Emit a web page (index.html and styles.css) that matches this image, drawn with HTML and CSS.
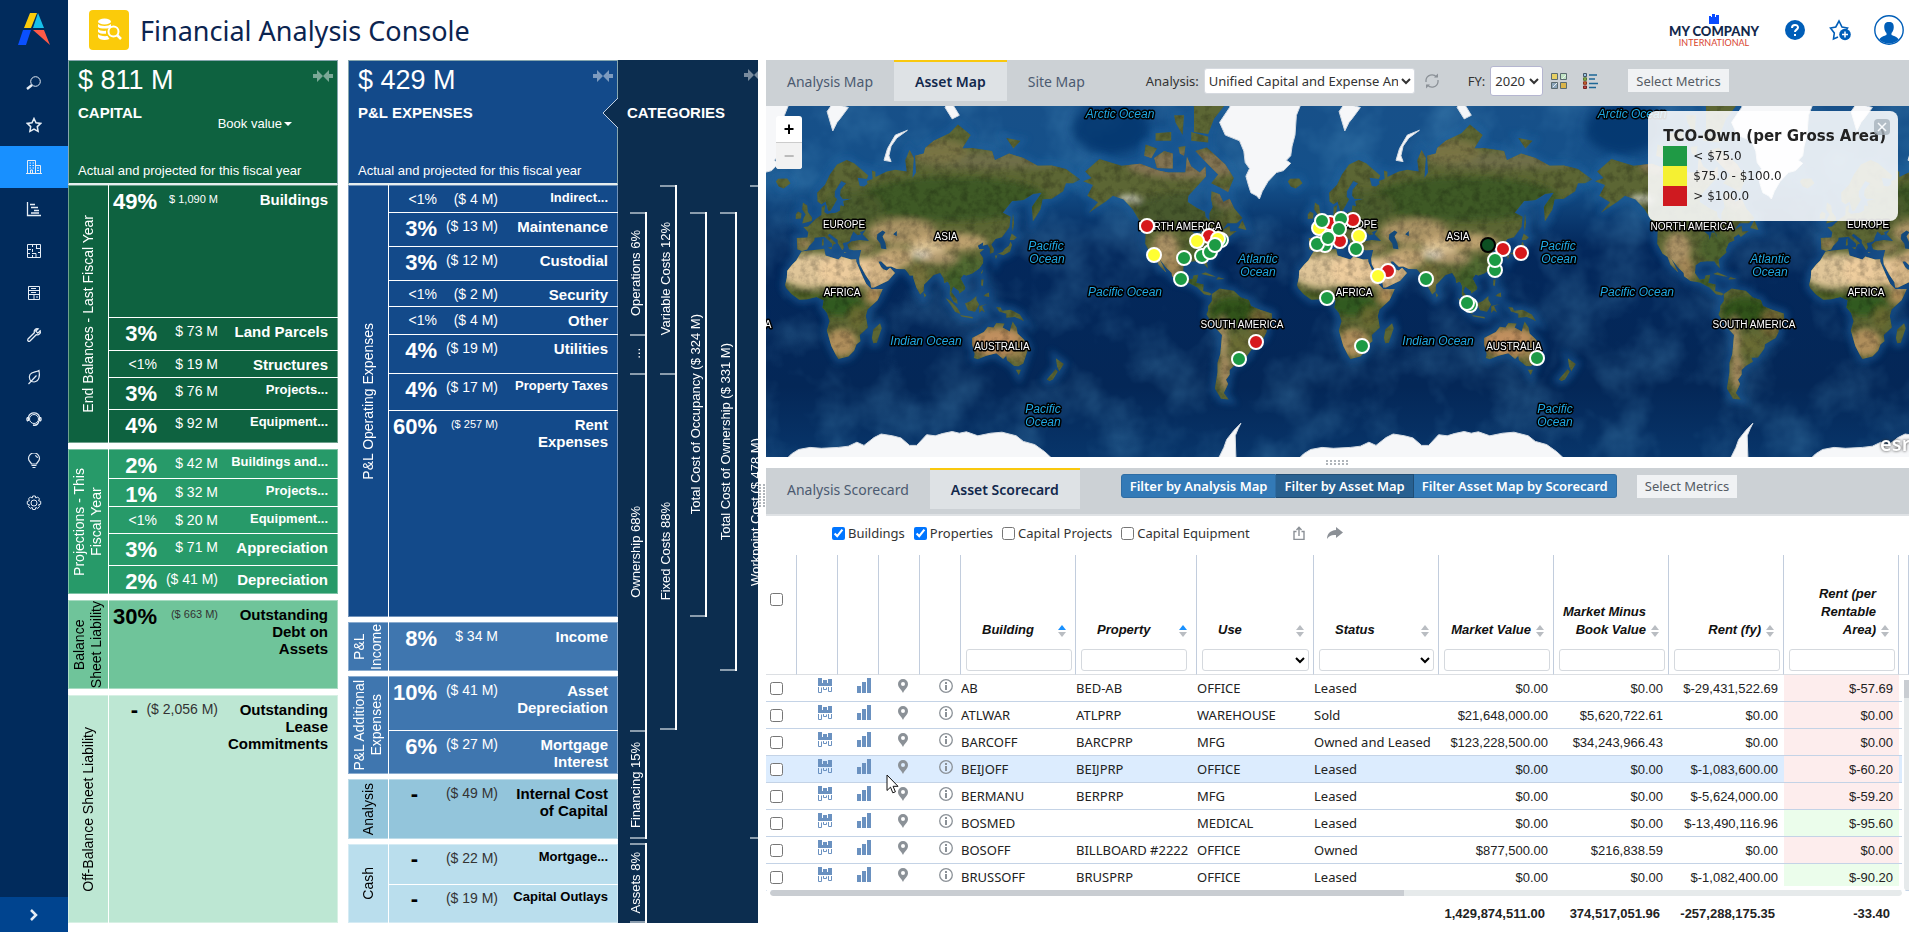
FILE: index.html
```html
<!DOCTYPE html>
<html lang="en">
<head>
  <meta charset="utf-8" />
  <meta name="viewport" content="width=device-width,initial-scale=1" />
  <title>Financial Analysis Console</title>
  <link rel="stylesheet" href="styles.css">
</head>
<body>
  <!-- shared icons -->
  <svg width="0" height="0" class="sprite">
    <symbol id="i-collapse" viewBox="0 0 20 12"><path d="M0 4h4V0l6 6-6 6V8H0zM20 4h-4V0l-6 6 6 6V8h4z" fill="currentColor"/></symbol>
    <symbol id="i-stack" viewBox="0 0 14 16"><path d="M0 0h4v5h1V2h4v3h1V1h4v7H0z" fill="currentColor"/><path d="M.5 9v5.500h3V9.500M5.500 9v2.500h3V9.500M10.500 9v4.500h3V9" fill="none" stroke="currentColor"/></symbol>
    <symbol id="i-bars" viewBox="0 0 14 16"><path d="M0 8h4v7H0zM5 4h4v11H5zM10 0h4v15h-4z" fill="currentColor"/></symbol>
    <symbol id="i-pin" viewBox="0 0 10 14"><path d="M5 0a5 5 0 0 0-5 5c0 3.500 3.500 5.500 5 9 1.500-3.500 5-5.500 5-9a5 5 0 0 0-5-5zm0 3a2 2 0 1 1 0 4 2 2 0 0 1 0-4z" fill="currentColor"/></symbol>
    <symbol id="i-info" viewBox="0 0 14 14"><circle cx="7" cy="7" r="6.300" fill="none" stroke="currentColor" stroke-width="1.300"/><path d="M6 3h2v2H6zM6 6h2v5H6z" fill="currentColor"/></symbol>
    <symbol id="i-sort" viewBox="0 0 8 12"><path class="up" d="M0 5l4-5 4 5z"/><path class="down" d="M0 7l4 5 4-5z"/></symbol>
  </svg>

  <div class="app">
    <nav class="sidebar">
      <a href="#" class="logo" aria-label="Home">
        <svg width="32" height="32" viewBox="0 0 32 32"><path d="M12 0h7l-6 15H6z" fill="#fbcb0a"/><path d="M20 0l6 15H15z" fill="#17c0ea"/><path d="M5 17h8L8 32H0z" fill="#0a50ff"/><path d="M15 17h11l6 15z" fill="#ff5a47"/></svg>
      </a>
      <a href="#" aria-label="Search"><svg width="16" height="16" viewBox="0 0 16 16"><circle cx="9.500" cy="6.500" r="4.800"/><path d="M6 10l-5 4" stroke-width="2.500"/></svg></a>
      <a href="#" aria-label="Favorites"><svg width="16" height="16" viewBox="0 0 16 16"><path stroke-width="1.500" d="M8 1.500l2 4.300 4.700.6-3.400 3.200.8 4.700L8 12l-4.100 2.300.8-4.700L1.300 6.400 6 5.800z"/></svg></a>
      <a href="#" class="active" aria-label="Real property"><svg width="16" height="16" viewBox="0 0 16 16"><path d="M0 14.500h16M1.500 14V1.500h8V14M9.500 6.500h5V14M3.500 4h1.500M6.500 4H8M3.500 6.500h1.500M6.500 6.500H8M3.500 9h1.500M6.500 9H8M4.500 14v-3h2v3M11 9h2M11 11.500h2"/></svg></a>
      <a href="#" aria-label="Projects"><svg width="16" height="16" viewBox="0 0 16 16"><path stroke-width="1.300" d="M1.500 1v13.500H15M4 3.500h5M5 6.500h7M8 9.500h5M5 12h8"/></svg></a>
      <a href="#" aria-label="Space"><svg width="16" height="16" viewBox="0 0 16 16"><path d="M1.500 1.500h13v13h-13zM1 6.500h4M6.500 1v3M6.500 6v3M10.500 1v4M10 5.500h4M1 10.500h3M6 10.500h4v4M6.500 12v2M12 9.500h3"/></svg></a>
      <a href="#" aria-label="Assets"><svg width="16" height="16" viewBox="0 0 16 16"><path d="M2.500 1.500h11v13h-11zM2 5.500h11M2 9.500h11M5 3.500h5M5 7.500h5M8 9.500v5M10 12h2"/></svg></a>
      <a href="#" aria-label="Maintenance"><svg width="16" height="16" viewBox="0 0 16 16"><path stroke-width="1.300" d="M14.200 3.800l-2.400 2.300-2-2 2.400-2.300C10 1 7.500 3 8.300 5.800L2 12c-1 1.500.6 3 2 2l6.200-6.300c2.800.8 4.800-1.600 4-3.900z"/></svg></a>
      <a href="#" aria-label="Sustainability"><svg width="16" height="16" viewBox="0 0 16 16"><path stroke-width="1.200" d="M13 1.500c1 5 .5 11-5 11.500-3.500 0-6-3.500-4-7.500 2-3 6-2 9-4zM2.500 15l8-8.500"/></svg></a>
      <a href="#" aria-label="Workplace"><svg width="16" height="16" viewBox="0 0 16 16"><circle cx="8" cy="8" r="4.500"/><path stroke-width="1.300" d="M2.500 10V6M2 6.500c-1.500 0-1.500 3.500 0 3.500M13.500 6v4M14 6.500c1.500 0 1.500 3.500 0 3.500M2.500 6C4 .5 12 .5 13.500 6M13 10c-1 4-4 4.500-6 4"/></svg></a>
      <a href="#" aria-label="Ideas"><svg width="16" height="16" viewBox="0 0 16 16"><path stroke-width="1.200" d="M5.500 11C5 9 2.500 8.500 2.500 5.500a5.500 5.500 0 0 1 11 0C13.500 8.500 11 9 10.500 11zM5.500 12.500h5M6.500 14.500h3M9 2.500c1.500.3 2.300 1.300 2.500 2.500"/></svg></a>
      <a href="#" aria-label="Settings"><svg width="16" height="16" viewBox="0 0 16 16"><circle cx="8" cy="8" r="3"/><path d="M6.700 1h2.600l.5 2 1.900-1 1.800 1.900-1 1.800 2.200.7v2.800l-2.200.6 1 1.800-1.800 1.800-1.900-1-.5 2.100H6.700l-.5-2.100-1.900 1-1.800-1.800 1-1.800-2.200-.6V6.400l2.200-.7-1-1.800L4.300 2l1.900 1z"/></svg></a>
      <button class="expand" aria-label="Expand"><svg width="10" height="12" viewBox="0 0 10 12"><path d="M2 1l5 5-5 5" stroke-width="2.500"/></svg></button>
    </nav>

    <header class="topbar">
      <span class="app-icon"><svg width="26" height="26" viewBox="0 0 26 26"><g fill="#fff"><ellipse cx="8.500" cy="4.500" rx="6.500" ry="3"/><path d="M2 7c2 2.500 11 2.500 13 0v3c-2 2-11 2-13 0zM2 12c1 1.500 5 2.200 8 1.800v3C7 17 3 16.500 2 15zM2 17c1 1.800 6 2.500 9.500 2l2 3C9 24 3 23 2 20z"/></g><circle cx="17.500" cy="14.500" r="5" fill="#fbcb0a" stroke="#fff" stroke-width="2"/><path d="M21 18l4 4" stroke="#fff" stroke-width="2.500"/></svg></span>
      <h1>Financial Analysis Console</h1>
      <div class="company">
        <svg width="10" height="10" viewBox="0 0 10 10"><path d="M0 2h2v1h1V0h3v3h1V1h3v9H0z" fill="#0a4bff"/></svg>
        <b>MY COMPANY</b><span>INTERNATIONAL</span>
      </div>
      <a href="#" class="help" aria-label="Help"><svg width="20" height="20" viewBox="0 0 20 20"><circle cx="10" cy="10" r="10" fill="#005eb8"/><path d="M7 8c0-4 6-4 6-.500 0 2-3 2.300-3 4.500M10 14v2" fill="none" stroke="#fff" stroke-width="2"/></svg></a>
      <a href="#" class="fav" aria-label="Add favorite"><svg width="22" height="22" viewBox="0 0 22 22"><path d="M9 18l-4.500 2 .8-6L1.500 9l5.300-1L10 2l3 6 5.500 1-1.500 2" fill="none" stroke="#005eb8" stroke-width="1.600"/><circle cx="16" cy="15.500" r="5.800" fill="#005eb8"/><path d="M16 12.500v6M13 15.500h6" stroke="#fff" stroke-width="1.500"/></svg></a>
      <a href="#" class="user" aria-label="My account"><svg width="30" height="30" viewBox="0 0 30 30"><circle cx="15" cy="15" r="14.200" fill="#fff" stroke="#005eb8" stroke-width="1.400"/><path d="M15 7c-4 0-5 2.500-4.700 6 .2 2.500 1.200 4 2.200 5v2c-2 1-5.500 1.500-7.300 4.500a14 14 0 0 0 19.600 0C23 21.500 19.500 21 17.500 20v-2c1-1 2-2.500 2.200-5C20 9.500 19 7 15 7z" fill="#005eb8"/></svg></a>
    </header>

    <main class="console">
      <section class="panel capital">
        <div class="panel-head g1">
          <svg class="collapse" width="20" height="12"><use href="#i-collapse"/></svg>
          <p class="total">$ 811 M</p>
          <h2>CAPITAL</h2>
          <button class="book-value">Book value</button>
          <p class="note">Actual and projected for this fiscal year</p>
        </div>
        <div class="groups">
          <div class="group g1" style="flex-grow:258">
            <div class="side"><span>End Balances - Last Fiscal Year</span></div>
            <div class="cells">
              <div class="cell" style="flex-grow:132"><b>49%</b><i class="small">$ 1,090 M</i><span>Buildings</span></div>
              <div class="cell" style="flex-grow:33"><b>3%</b><i>$ 73 M</i><span>Land Parcels</span></div>
              <div class="cell" style="flex-grow:27"><b class="lt">&lt;1%</b><i>$ 19 M</i><span>Structures</span></div>
              <div class="cell" style="flex-grow:32"><b>3%</b><i>$ 76 M</i><span class="short">Projects...</span></div>
              <div class="cell" style="flex-grow:34"><b>4%</b><i>$ 92 M</i><span class="short">Equipment...</span></div>
            </div>
          </div>
          <div class="group g2" style="flex-grow:145">
            <div class="side"><span>Projections - This<br>Fiscal Year</span></div>
            <div class="cells">
              <div class="cell" style="flex-grow:29"><b>2%</b><i>$ 42 M</i><span class="short">Buildings and...</span></div>
              <div class="cell" style="flex-grow:28"><b>1%</b><i>$ 32 M</i><span class="short">Projects...</span></div>
              <div class="cell" style="flex-grow:27"><b class="lt">&lt;1%</b><i>$ 20 M</i><span class="short">Equipment...</span></div>
              <div class="cell" style="flex-grow:32"><b>3%</b><i>$ 71 M</i><span>Appreciation</span></div>
              <div class="cell" style="flex-grow:29"><b>2%</b><i>($ 41 M)</i><span>Depreciation</span></div>
            </div>
          </div>
          <div class="group g3" style="flex-grow:89">
            <div class="side"><span>Balance<br>Sheet Liability</span></div>
            <div class="cells">
              <div class="cell" style="flex-grow:89"><b>30%</b><i class="small">($ 663 M)</i><span>Outstanding Debt on Assets</span></div>
            </div>
          </div>
          <div class="group g4" style="flex-grow:228">
            <div class="side"><span>Off-Balance Sheet Liability</span></div>
            <div class="cells">
              <div class="cell" style="flex-grow:228"><b class="dash">-</b><i>($ 2,056 M)</i><span>Outstanding Lease Commitments</span></div>
            </div>
          </div>
        </div>
      </section>

      <section class="panel expenses">
        <div class="panel-head b1">
          <svg class="collapse" width="20" height="12"><use href="#i-collapse"/></svg>
          <p class="total">$ 429 M</p>
          <h2>P&amp;L EXPENSES</h2>
          <p class="note">Actual and projected for this fiscal year</p>
          <svg class="notch" width="16" height="32" viewBox="0 0 16 32"><path d="M16 1L1 16l15 15z" fill="#0c2d4f"/><path d="M16 1L1 16l15 15" fill="none" stroke="#c4d2e4"/></svg>
        </div>
        <div class="groups tight">
          <div class="group b1" style="flex-grow:432">
            <div class="side"><span>P&amp;L Operating Expenses</span></div>
            <div class="cells">
              <div class="cell" style="flex-grow:27"><b class="lt">&lt;1%</b><i>($ 4 M)</i><span class="short">Indirect...</span></div>
              <div class="cell" style="flex-grow:34"><b>3%</b><i>($ 13 M)</i><span>Maintenance</span></div>
              <div class="cell" style="flex-grow:34"><b>3%</b><i>($ 12 M)</i><span>Custodial</span></div>
              <div class="cell" style="flex-grow:26"><b class="lt">&lt;1%</b><i>($ 2 M)</i><span>Security</span></div>
              <div class="cell" style="flex-grow:28"><b class="lt">&lt;1%</b><i>($ 4 M)</i><span>Other</span></div>
              <div class="cell" style="flex-grow:39"><b>4%</b><i>($ 19 M)</i><span>Utilities</span></div>
              <div class="cell" style="flex-grow:37"><b>4%</b><i>($ 17 M)</i><span class="short">Property Taxes</span></div>
              <div class="cell" style="flex-grow:207"><b>60%</b><i class="small">($ 257 M)</i><span>Rent<br>Expenses</span></div>
            </div>
          </div>
          <div class="group b2" style="flex-grow:49">
            <div class="side"><span>P&amp;L<br>Income</span></div>
            <div class="cells">
              <div class="cell" style="flex-grow:49"><b>8%</b><i>$ 34 M</i><span>Income</span></div>
            </div>
          </div>
          <div class="group b2" style="flex-grow:98">
            <div class="side"><span>P&amp;L Additional<br>Expenses</span></div>
            <div class="cells">
              <div class="cell" style="flex-grow:54"><b>10%</b><i>($ 41 M)</i><span>Asset Depreciation</span></div>
              <div class="cell" style="flex-grow:44"><b>6%</b><i>($ 27 M)</i><span>Mortgage Interest</span></div>
            </div>
          </div>
          <div class="group b3" style="flex-grow:60">
            <div class="side"><span>Analysis</span></div>
            <div class="cells">
              <div class="cell" style="flex-grow:60"><b class="dash">-</b><i>($ 49 M)</i><span>Internal Cost of Capital</span></div>
            </div>
          </div>
          <div class="group b4" style="flex-grow:79">
            <div class="side"><span>Cash</span></div>
            <div class="cells">
              <div class="cell" style="flex-grow:40"><b class="dash">-</b><i>($ 22 M)</i><span class="short">Mortgage...</span></div>
              <div class="cell" style="flex-grow:39"><b class="dash">-</b><i>($ 19 M)</i><span class="short">Capital Outlays</span></div>
            </div>
          </div>
        </div>
      </section>

      <section class="panel categories">
        <div class="cat-head">
          <svg class="collapse" width="20" height="12"><use href="#i-collapse"/></svg>
          <h2>CATEGORIES</h2>
        </div>
        <div class="cat-body">
          <div class="cat-col">
            <div style="flex-grow:27"></div>
            <div class="seg" style="flex-grow:122"><span>Operations 6%</span></div>
            <div class="seg" style="flex-grow:39"><span>...</span></div>
            <div class="seg" style="flex-grow:357"><span>Ownership 68%</span></div>
            <div class="seg end" style="flex-grow:109"><span>Financing 15%</span></div>
            <div style="flex-grow:4"></div>
            <div class="seg end" style="flex-grow:80"><span>Assets 8%</span></div>
          </div>
          <div class="cat-col">
            <div class="seg" style="flex-grow:188"><span>Variable Costs 12%</span></div>
            <div class="seg end" style="flex-grow:357"><span>Fixed Costs 88%</span></div>
            <div style="flex-grow:193"></div>
          </div>
          <div class="cat-col">
            <div style="flex-grow:27"></div>
            <div class="seg end" style="flex-grow:405"><span>Total Cost of Occupancy ($ 324 M)</span></div>
            <div style="flex-grow:306"></div>
          </div>
          <div class="cat-col">
            <div style="flex-grow:27"></div>
            <div class="seg end" style="flex-grow:459"><span>Total Cost of Ownership ($ 331 M)</span></div>
            <div style="flex-grow:252"></div>
          </div>
          <div class="cat-col">
            <div class="seg end" style="flex-grow:654"><span>Workpoint Cost ($ 478 M)</span></div>
            <div style="flex-grow:84"></div>
          </div>
        </div>
      </section>

      <div class="splitter-v"></div>

      <section class="work">
        <div class="toolbar">
          <button class="tab">Analysis Map</button>
          <button class="tab on">Asset Map</button>
          <button class="tab">Site Map</button>
          <label class="lbl-analysis" for="analysis">Analysis:</label>
          <select id="analysis" class="sel-analysis"><option>Unified Capital and Expense Analysis</option></select>
          <button class="icon-btn refresh" aria-label="Refresh"><svg width="16" height="16" viewBox="0 0 16 16"><path d="M2 9V7a6 6 0 0 1 10.500-3M14 7v2A6 6 0 0 1 3.500 12" fill="none" stroke="#8b9197" stroke-width="1.300"/><path d="M10 4.500h4v-4zM6 11.500H2v4z" fill="#8b9197"/></svg></button>
          <label for="fy">FY:</label>
          <select id="fy" class="sel-fy"><option>2020</option></select>
          <button class="icon-btn grid-ico" aria-label="Basemap"><svg width="16" height="16" viewBox="0 0 16 16"><g stroke="#5a6b70"><path d="M.5.500h6v6h-6z" fill="#e6cf63"/><path d="M9.500.500h6v6h-6z" fill="#bfe3c2"/><path d="M.5 9.500h6v6h-6z" fill="#8da6bb"/><path d="M9.500 9.500h6v6h-6z" fill="#d9b44a"/></g><path d="M11 6l4-4M2 14l4-4" stroke="#e8f0f0"/></svg></button>
          <button class="icon-btn" aria-label="Legend"><svg width="16" height="16" viewBox="0 0 16 16"><path d="M6 2h8M6 6h6M6 10.500h9M6 14.500h7" stroke="#1d6796" stroke-width="1.500"/><path d="M.5.500h3v3h-3z" fill="#9ac6e2" stroke="#456"/><path d="M.5 4.800h3v2.500h-3z" fill="#8fb347" stroke="#573"/><path d="M.5 8.800h3v2.500h-3z" fill="#cf6a2c" stroke="#832"/><path d="M.5 13h3v2.500h-3z" fill="#b44" stroke="#722"/></svg></button>
          <button class="metrics m-top">Select Metrics</button>
        </div>

        <div class="map">
          <svg id="world" width="100%" height="100%"></svg>
          <div class="zoom"><button>+</button><button disabled>−</button></div>
          <div class="legend">
            <button class="close" aria-label="Close"><svg width="16" height="16" viewBox="0 0 16 16"><path d="M4 4l8 8M12 4l-8 8" stroke="#fff" stroke-width="1.500"/></svg></button>
            <h3>TCO-Own (per Gross Area)</h3>
            <ul>
              <li><span class="sw green"></span>&lt; $75.0</li>
              <li><span class="sw yellow"></span>$75.0 - $100.0</li>
              <li><span class="sw red"></span>&gt; $100.0</li>
            </ul>
          </div>
          <span class="esri">esri</span>
        </div>
        <div class="splitter-h"></div>

        <div class="toolbar score-bar">
          <button class="tab">Analysis Scorecard</button>
          <button class="tab on">Asset Scorecard</button>
          <div class="btn-group">
            <button>Filter by Analysis Map</button><button class="on">Filter by Asset Map</button><button>Filter Asset Map by Scorecard</button>
          </div>
          <button class="metrics">Select Metrics</button>
        </div>

        <div class="checks">
          <label><input type="checkbox" checked>Buildings</label>
          <label><input type="checkbox" checked>Properties</label>
          <label><input type="checkbox">Capital Projects</label>
          <label><input type="checkbox">Capital Equipment</label>
          <button class="icon-btn export" aria-label="Export"><svg width="12" height="14" viewBox="0 0 12 14"><path d="M3.500 5.500H1v8h10v-8H8.500M6 10V1.500M3.500 4L6 1.300 8.500 4" fill="none" stroke="#8b9096" stroke-width="1.400"/></svg></button>
          <button class="icon-btn" aria-label="Share"><svg width="16" height="12" viewBox="0 0 16 12"><path d="M9 0l7 5.500L9 11V8C5 7.500 2 8.500 0 12 0 7 3 3.500 9 3z" fill="#8b9096"/></svg></button>
        </div>

        <div class="grid-wrap">
          <table class="score">
            <colgroup><col class="c-check"><col class="c-ico"><col class="c-ico"><col class="c-ico"><col class="c-ico"><col class="c-num"><col class="c-prop"><col class="c-use"><col class="c-stat"><col class="c-num"><col class="c-num"><col class="c-num"><col class="c-num"><col></colgroup>
            <thead>
              <tr class="names">
                <th class="pick"><input type="checkbox" aria-label="Select all"></th><th></th><th></th><th></th><th></th>
                <th class="sorted"><div>Building<svg width="8" height="12"><use href="#i-sort"/></svg></div></th>
                <th class="sorted"><div>Property<svg width="8" height="12"><use href="#i-sort"/></svg></div></th>
                <th><div>Use<svg width="8" height="12"><use href="#i-sort"/></svg></div></th>
                <th><div>Status<svg width="8" height="12"><use href="#i-sort"/></svg></div></th>
                <th class="num"><div><span>Market Value</span><svg width="8" height="12"><use href="#i-sort"/></svg></div></th>
                <th class="num"><div><span>Market Minus Book Value</span><svg width="8" height="12"><use href="#i-sort"/></svg></div></th>
                <th class="num"><div><span>Rent (fy)</span><svg width="8" height="12"><use href="#i-sort"/></svg></div></th>
                <th class="num"><div><span>Rent (per Rentable Area)</span><svg width="8" height="12"><use href="#i-sort"/></svg></div></th>
                <th></th>
              </tr>
              <tr class="filters">
                <td></td><td></td><td></td><td></td><td></td>
                <td><input type="text" aria-label="Filter Building"></td>
                <td><input type="text" aria-label="Filter Property"></td>
                <td><select aria-label="Filter Use"><option></option></select></td>
                <td><select aria-label="Filter Status"><option></option></select></td>
                <td><input type="text" aria-label="Filter Market Value"></td>
                <td><input type="text" aria-label="Filter Market Minus Book Value"></td>
                <td><input type="text" aria-label="Filter Rent (fy)"></td>
                <td><input type="text" aria-label="Filter Rent (per Rentable Area)"></td>
                <td></td>
              </tr>
            </thead>
            <tbody id="rows"></tbody>
            <tfoot>
              <tr><td colspan="9"></td><td>1,429,874,511.00</td><td>374,517,051.96</td><td>-257,288,175.35</td><td>-33.40</td><td></td></tr>
            </tfoot>
          </table>
          <div class="vscroll"></div>
          <div class="hscroll"></div>
          <svg class="cursor" width="14" height="21" viewBox="0 0 14 21"><path d="M1 1v15.500l3.500-3.300 2.300 5.600 2.600-1-2.300-5.500H12z" fill="#fff" stroke="#111"/></svg>
        </div>
      </section>
    </main>
  </div>
  <script src="app.js"></script>
</body>
</html>
```
FILE: styles.css
```css
/* base */
* { box-sizing: border-box; }
body {
  margin: 0;
  background: #fff; color: #333;
  font-family: "Noto Sans", "Open Sans", sans-serif;
  font-size: 13px;
}
h1, h2, h3, p, ul { margin: 0; padding: 0; }
button { font-family: inherit; border: 0; padding: 0; background: none; cursor: pointer; }
.sprite { position: absolute; }
.app {
  display: grid;
  grid-template: 60px 1fr / 68px 1fr;
  height: 100vh; overflow: hidden;
}

/* sidebar */
.sidebar {
  grid-row: 1 / 3;
  background: #012b5c;
  display: flex; flex-direction: column;
}
.sidebar a, .expand {
  flex: 0 0 42px;
  display: flex; align-items: center; justify-content: center;
}
.sidebar svg { fill: none; stroke: #e6edf5; }
.sidebar .logo { flex-basis: 62px; padding-bottom: 4px; }
.sidebar .logo svg { stroke: none; }
.sidebar a.active { background: #1890ff; }
.expand { flex-basis: 35px; margin-top: auto; background: #00448f; }

/* top bar */
.topbar { display: flex; align-items: center; padding: 0 5px 0 21px; }
.app-icon {
  width: 40px; height: 40px; border-radius: 4px;
  background: #fbcb0a;
  display: flex; align-items: center; justify-content: center;
}
.topbar h1 { margin-left: 11px; font-size: 27px; font-weight: 400; color: #0b2450; }
.company {
  margin-left: auto;
  display: flex; flex-direction: column; align-items: center;
  font-family: Lato, sans-serif; color: #12284c;
}
.company b { font-size: 13px; line-height: 14px; font-weight: 900; }
.company span { font-size: 9px; line-height: 9px; color: #d8432e; }
.topbar a { display: flex; }
.help { margin-left: 26px; }
.fav { margin-left: 24px; }
.user { margin-left: 23px; }

/* treemap panels */
.console { display: flex; min-width: 0; min-height: 0; }
.panel {
  flex: none; width: 270px; margin-bottom: 9px;
  display: flex; flex-direction: column;
  font-family: "Liberation Sans", Arial, sans-serif;
  color: #fff;
}
.expenses { margin-left: 10px; }
.panel-head, .cat-head {
  position: relative; flex: 0 0 125px;
  padding: 0 9px;
}
.panel-head { border: 1px solid #86a6ae; border-bottom: 2px solid #e6eeee; }
.total { font-size: 27px; line-height: 32px; padding-top: 3px; }
.panel h2 { font-size: 15px; line-height: 20px; margin-top: 7px; }
.note { position: absolute; left: 9px; bottom: 4px; font-size: 13px; line-height: 16px; }
.book-value { position: absolute; right: 45px; top: 55px; font-size: 13px; line-height: 16px; color: #fff; font-family: inherit; }
.book-value::after {
  content: ""; display: inline-block; margin-left: 2px; vertical-align: 2px;
  border: 4px solid transparent; border-top-color: #fff; border-bottom: 0;
}
.collapse { position: absolute; right: 4px; top: 9px; color: rgba(255,255,255,.45); }
.notch { position: absolute; right: -1px; top: 36px; }

.groups { flex: 1; min-height: 0; display: flex; flex-direction: column; gap: 6px; }
.groups.tight { gap: 5px; }
.group, .cell { flex: 1 0 0; min-height: 0; }
.group { display: flex; box-shadow: inset 0 0 0 1px rgba(255,255,255,.4); }
.side {
  flex: 0 0 41px; border-right: 1px solid #fff;
  display: flex; align-items: center; justify-content: center;
  font-size: 14px; line-height: 17px; text-align: center;
}
.side span, .seg span { writing-mode: vertical-rl; transform: rotate(180deg); white-space: nowrap; }
.cells { flex: 1; display: flex; flex-direction: column; }
.cell {
  display: grid; grid-template-columns: 48px 61px 1fr;
  align-items: start;
  padding-right: 10px; text-align: right;
  font-size: 14px; line-height: 17px;
}
.cell > * { padding-top: 6px; }
.cell + .cell { box-shadow: inset 0 1px #fff; }
.cell b { font-size: 22px; line-height: 22px; }
.cell b.lt { font-size: 14px; line-height: 17px; font-weight: 400; }
.cell b.dash { line-height: 17px; padding-right: 19px; }
.cell i { font-style: normal; white-space: nowrap; justify-self: end; }
.cell i.small { font-size: 11px; }
.cell span { font-size: 15px; font-weight: 700; padding-left: 4px; }
.cell span.short { font-size: 13px; line-height: 13px; }

.g1 { background: #0e6240; }
.g2 { background: #279a69; }
.g3 { background: #6fc49a; color: #000; }
.g4 { background: #bde7d3; color: #000; }
.b1 { background: #134a8a; }
.b2 { background: #3f76af; }
.b3 { background: #93c5db; color: #000; }
.b4 { background: #badeed; color: #000; }
.g3 .cell i, .g4 .cell i, .b3 .cell i, .b4 .cell i { color: #333; }

/* categories */
.categories { width: 140px; background: #0c2d4f; overflow: hidden; }
.cat-head h2 { padding-top: 36px; }
.cat-head .collapse { right: -6px; }
.cat-body { flex: 1; min-height: 0; display: flex; gap: 13px; padding-left: 12px; }
.cat-col { flex: 0 0 17px; display: flex; flex-direction: column; }
.cat-col > div { flex: 1 0 0; min-height: 0; }
.seg {
  box-shadow: inset -2px 0 #fff, inset 0 2px #8b9dae;
  display: flex; align-items: center;
  font-size: 13px; line-height: 11px;
}
.seg.end { box-shadow: inset -2px 0 #fff, inset 0 2px #8b9dae, inset 0 -2px #8b9dae; }

/* splitters */
.splitter-v { flex: 0 0 8px; }
.splitter-v, .splitter-h { display: flex; align-items: center; justify-content: center; }
.splitter-h { flex: 0 0 11px; }
.splitter-h::after, .splitter-v::after {
  content: ""; width: 24px; height: 6px;
  background: radial-gradient(circle at 1px 1px, #b0b5ba 1px, transparent 1px) 0 0 / 4px 3px;
}
.splitter-v::after { width: 6px; height: 24px; }

/* toolbars */
.work { flex: 1; min-width: 0; display: flex; flex-direction: column; }
.toolbar {
  flex: 0 0 46px; background: #ccd1d5;
  display: flex; align-items: center; padding-bottom: 5px;
  white-space: nowrap; overflow: hidden;
}
.tab {
  align-self: stretch; padding: 0 21px;
  border-top: 2px solid transparent;
  font-size: 14px; color: #4b5a70;
}
.tab.on { background: #dee2e5; border-top-color: #f9c80e; color: #12284c; font-weight: 600; }
.lbl-analysis { margin-left: 40px; }
.toolbar select {
  height: 26px; background: #fff; color: #333;
  font-family: inherit; font-size: 13px;
  border: 1px solid #d6dae0; border-radius: 3px;
}
.toolbar .sel-analysis { width: 211px; margin-left: 5px; }
.toolbar .sel-fy { width: 53px; height: 30px; margin-left: 5px; border-color: #b5b6d0; }
.icon-btn { display: flex; }
.refresh { margin: 0 28px 0 9px; }
.grid-ico { margin: 0 16px 0 8px; }
.metrics {
  height: 23px; padding: 0 8px; background: #f0f2f4;
  font-size: 13px; color: #555c64;
}
.m-top { margin-left: 29px; }
.score-bar { flex-basis: 48px; border-bottom: 2px solid #dfe2e5; }
.btn-group { display: flex; margin: 0 20px 5px 41px; }
.btn-group + .metrics { margin-bottom: 5px; }
.btn-group button {
  height: 24px; padding: 0 8px;
  background: #337ab7; border: 1px solid #2e6da4;
  color: #fff; font-size: 13px; font-weight: 600;
}
.btn-group button + button { border-left: 0; }
.btn-group button:first-child { border-radius: 3px 0 0 3px; }
.btn-group button:last-child { border-radius: 0 3px 3px 0; }
.btn-group .on { background: #286090; border-color: #204d74; }

/* map */
.map { position: relative; flex: 0 0 351px; overflow: hidden; background: #052b61; }
#world { display: block; }
#world text { font-family: "Liberation Sans", Arial, sans-serif; text-anchor: middle; paint-order: stroke; stroke: #000; stroke-width: 3px; stroke-linejoin: round; }
#world .land-name { font-size: 10px; fill: #fff; }
#world .sea-name { font-size: 12px; font-style: italic; fill: #1fa8e4; }
.zoom {
  position: absolute; left: 10px; top: 10px; width: 26px;
  background: #fff; border-radius: 3px; overflow: hidden;
  display: flex; flex-direction: column;
}
.zoom button { height: 26px; font: 700 18px "Liberation Sans", sans-serif; color: #000; }
.zoom button:disabled { height: 27px; background: #f2f2f2; color: #bbb; border-top: 1px solid #ccc; }
.legend {
  position: absolute; right: 11px; top: 5px; height: 110px;
  padding: 16px 12px 0 15px; border-radius: 8px;
  background: rgba(255,255,255,.88);
  font-family: "DejaVu Sans", Verdana, sans-serif; color: #222;
}
.legend h3 { font-size: 15px; line-height: 19px; white-space: nowrap; }
.legend ul { list-style: none; }
.legend li { display: flex; gap: 6px; font-size: 12px; line-height: 20px; }
.sw { width: 24px; height: 20px; }
.sw.green { background: #1f9a45; }
.sw.yellow { background: #f5f032; }
.sw.red { background: #cf1a20; }
.close { position: absolute; right: 8px; top: 8px; width: 16px; height: 16px; border-radius: 4px; background: #a9b4bd; opacity: .8; }
.close svg { display: block; }
.esri { position: absolute; right: -7px; bottom: 0; font-size: 20px; font-weight: 600; line-height: 26px; color: #fff; text-shadow: 0 0 3px #333; }

/* scorecard filters */
.checks { flex: 0 0 39px; display: flex; align-items: center; padding: 0 0 5px 66px; gap: 9px; }
.checks label { display: flex; align-items: center; gap: 3px; }
.checks input, .score input[type="checkbox"] { width: 13px; height: 13px; margin: 0; }
.export { margin: 0 13px 0 34px; }

/* scorecard grid */
.grid-wrap { position: relative; flex: 1; min-height: 0; overflow: hidden; }
.score { width: 100%; table-layout: fixed; border-collapse: separate; border-spacing: 0; font-size: 13px; color: #222; }
.c-check { width: 31px; }
.c-ico { width: 41px; }
.c-num { width: 115px; }
.c-prop { width: 121px; }
.c-use { width: 117px; }
.c-stat { width: 125px; }
.score th, .score td { padding: 0; white-space: nowrap; overflow: hidden; text-align: left; }
.score thead th, .score thead td { border-right: 1px solid #c2cddd; }
.names th { height: 88px; vertical-align: bottom; font: italic 700 13px/18px "Liberation Sans", Arial, sans-serif; color: #111; }
.names th div { display: flex; align-items: flex-end; justify-content: space-between; padding: 0 9px 4px 21px; }
.names th svg { flex: none; margin-bottom: 2px; fill: #b9bdc2; }
.names .sorted { --up: #1890ff; }
.up { fill: var(--up, #b9bdc2); }
.names .num { text-align: right; white-space: normal; }
.names .num div { justify-content: flex-end; gap: 5px; padding-left: 6px; }
.names .pick { padding-left: 4px; vertical-align: middle; }
.names .pick input { display: block; }
.filters td { height: 32px; padding: 2px 4px 0 5px; border-bottom: 1px solid #dcdfe3; }
.filters input, .filters select { display: block; width: 106px; height: 22px; background: #fff; border: 1px solid #d5d9de; border-radius: 3px; }
.filters select { width: 100%; }
.score tbody td { height: 27px; border-bottom: 1px solid #c4d3e6; }
.score tbody td:first-child { padding-left: 4px; }
.score tbody .ico { padding-left: 21px; color: #8b9197; }
.score tbody .ico.wide { color: #6a91c0; }
.score tbody .ico + .ico { padding-left: 19px; }
.score tbody td svg, .score tbody td input { display: block; }
.score tbody td svg { margin-bottom: 4px; }
.score tbody .fig, .score tfoot td { text-align: right; padding-right: 6px; font-family: "Liberation Sans", Arial, sans-serif; }
.score tr.hover td { background: #dcecfe; }
.score tbody td.low, .score tr.hover td.low { background: #fdeded; }
.score tbody td.high { background: #ebfdeb; }
.score tfoot td { height: 42px; padding: 3px 9px 0 0; font-weight: 700; }
.hscroll {
  position: absolute; left: 4px; right: 7px; top: 335px; height: 6px; border-radius: 3px;
  background: linear-gradient(90deg, #c9cdd2 56%, #e6eaeb 56%);
  outline: 4px solid #fff;
}
.vscroll {
  position: absolute; right: 0; top: 121px; width: 7px; height: 214px;
  background: linear-gradient(#c9cdd2 18px, #e6eaeb 18px) 2px 4px no-repeat #fff;
}
.cursor { position: absolute; left: 120px; top: 219px; }
```
FILE: app.js
```js
// ---- world map, web mercator at zoom level 1 ----
const WORLD = 512;      // px per 360 degrees
const MERIDIAN = 44;    // px of the first lon 0
const EQUATOR = 200;

function px(lon) { return +(lon * WORLD / 360).toFixed(1); }
function py(lat) {
  const r = lat * Math.PI / 180;
  return +(EQUATOR - Math.log(Math.tan(Math.PI / 4 + r / 2)) * WORLD / (2 * Math.PI)).toFixed(1);
}
// "lon,lat lon,lat ..." -> path
function shape(s) {
  return 'M' + s.split(' ').map(p => {
    const [lon, lat] = p.split(',').map(Number);
    return px(lon) + ' ' + py(lat);
  }).join('L') + 'Z';
}

const land = [
  // eurasia
  '-9,38.5 -9.3,43 -1.8,43.4 -1.2,46 -4.7,48.4 -1.5,48.7 1.5,50.5 4,52 8,53.8 8.2,57 10.6,57.7 10,55 12,54.2 18.5,54.7 21,55.5 21.5,57.5 24,57.2 23.5,59.2 30,60 23,60 21.3,61 21.5,63 25.3,65 22,65.7 17.5,62.5 17.2,60.7 19,59.8 16.5,57.5 14.3,55.5 12.9,55.5 11,59 8,58 5.3,59 5,62 10.5,64.5 14,67.5 19,70 25.8,71.1 31,70.3 41,67.2 40,66.2 33.5,66.6 35,64.2 38,64 40.5,64.8 40,65.7 44,66.2 43.5,68.5 46,68.2 46,66.8 54,68.3 60,68.7 68,68.3 67,71 70,73.2 73,71.5 72,66.5 74.5,68 74,72 80,72.5 81,73.6 87,75 98,76.3 104,77.7 113,76 107,73.5 114,73.6 128,73 130,71 140,72.5 150,71.5 160,69.7 170,69.8 180,68.9 190,66.1 185,65 180,65 178,62.5 170,60 163.5,59.8 162,56 156.7,51 156,57 163,62 157,61.7 150,59.5 142,59.2 135.5,54.7 141,53 140.3,48.5 135,43.5 130.5,42.5 127.5,39.7 129.4,37 129,35.2 126.5,34.5 126.5,37.5 124.8,39.7 121.5,39 121.8,40.8 118,39 119,37.2 122.5,37.2 119.3,35 121.8,32 121.7,29 119,25.5 114,22.3 110,21 108,21.6 105.8,19 109.2,13 108.8,11.5 105,8.8 104.8,10.5 102,12.5 100.7,13.5 99.3,10 103.4,4.5 103.8,1.4 101,3 98.3,8 98.5,14 97,17 94.3,16 94,19 91.5,22.5 87,21.3 82,16.5 80.2,15 79.9,10.3 77.5,8.1 74.8,13 72.8,19 72.5,21 70,21 69,22.5 66.7,25 61,25.2 57,26.8 54,26.6 50,30 48,29.8 50,26.5 51.5,25 54,24.2 56.3,26 59.8,22.5 55,17.5 45,12.8 43,13 42.5,16.5 39,21.3 35,28 34.5,31.5 36,36.6 30.5,36.5 27.5,37 26.3,39.5 29,41.2 35,42 41.5,41.5 37,45 39,47 35,46 36,45 33.5,44.5 30.5,46.3 28.6,43.5 28,41.5 26,40.8 23,40.5 24,38 22.7,36.5 19.5,40.5 19.5,42 13.7,45.2 12.4,44.3 18.4,40.2 16.5,39.7 15.8,38 15.4,40.2 10.3,43.7 7,43.5 3.2,43.2 3,41.8 -.5,39 -2,36.8 -5.6,36 -9,37',
  // africa, madagascar
  '-6,35.8 10,37.3 11,33.5 20,31 22,32.8 29,31 32.5,31.2 32.5,29.8 37,20.5 39.5,15.5 43.2,11.7 51.2,11.8 47.5,4 40.5,-2.5 39.2,-7 40.7,-15 35,-20 35.5,-24 32.8,-26 31,-30 27,-33.5 20,-34.8 18.2,-32.5 15,-27 11.8,-17 13.7,-10.7 12,-5 8.8,-1 9.7,4 4.5,6.3 -2,4.8 -7.5,4.4 -13,8.5 -16.8,12.5 -17.5,14.7 -16.3,19.5 -16,24 -12.5,28 -9.7,30.5',
  '49.3,-12 50.4,-15.5 47,-25 44.5,-25.3 43.5,-22 44.5,-16.2',
  // north america
  '-168,65.6 -162,66.5 -166.5,68.3 -156.5,71.3 -141,69.7 -128,70.2 -115,68.5 -108,68 -96,68 -95,71.8 -92,69.5 -86,68 -82,69.5 -81.5,67 -87,64.5 -94,61 -94.5,58.8 -88,56.6 -82.3,55 -82,53 -79,51.3 -79,54.5 -76.7,57 -78,60 -77.7,62.5 -72,61.5 -69.5,58.8 -65,60 -61.7,56.5 -56,52.5 -60,50.2 -66.5,50.2 -70,47 -65,49 -64.5,46.3 -60,46.5 -65.5,43.6 -67,45 -70.5,43.3 -70,41.7 -74,40.6 -76,37 -75.7,35.2 -81.3,31 -80.2,25.5 -82.7,28 -84,30 -89.5,30 -94,29.5 -97.3,27.5 -97.7,22.5 -94.5,18.2 -91,18.7 -90.3,21 -87,21.5 -88.5,16 -83.3,15 -83.5,10.5 -79.5,9.5 -77.5,8.5 -79,7.3 -83,8.3 -87.5,13 -94,16.2 -101,17.3 -105.5,20.5 -105.7,22.5 -109.5,26 -114.5,31.5 -112,27.5 -109.5,23 -112,25 -115,28 -117,32.5 -120.5,34.5 -124.3,40 -124,46 -123,49 -128,51 -133,56 -139.5,59.7 -147,61 -152,59 -164,54.7 -157.5,58.7 -165,61 -161,64.5',
  '-62,66.5 -66,62.3 -72,63.8 -78,65 -73,67.5 -80,70 -89,73 -81,73.7 -73,71.5 -68,70',
  '-116,69.2 -105,69 -105,72.5 -111,73 -118,71.5', '-125,72 -120,71.5 -116,73.5 -124,74.3',
  '-92,75 -80,74.7 -80,75.7 -92,76.5', '-117,75 -106,75 -106,76.5 -117,76.3', '-100,72.5 -97,72 -96,74 -101,73.8',
  '-90,76.5 -80,76.2 -76,78.5 -65,81 -60,83 -95,83 -90,80', '-103,78 -98,76 -97,79 -104,79',
  '-85,21.9 -82,23.1 -74.5,20.2 -78,20.5', '-74.3,18.4 -73,19.9 -68.5,18.6', '-59,48 -56,51.5 -53,47',
  // south america
  '-77.5,8.5 -72,12.2 -62,10.7 -57,6 -51.5,4.2 -50,0 -44,-2.5 -35.3,-5.3 -35,-9 -39,-13 -39,-18 -41,-22 -48.5,-26 -49,-28.7 -53.5,-34 -58,-34.2 -57,-36.5 -62,-38.8 -65,-41 -65,-43.5 -67.5,-46 -66,-48 -69,-52 -65.5,-54.8 -71,-54.5 -75.3,-50 -73.5,-42 -73.5,-37 -71.5,-32 -70.3,-20 -76.2,-14 -81.2,-6 -80,-3 -80,0 -77.5,3.5',
  // europe islands
  '-24,65.5 -22,64 -18.5,63.4 -13.7,65 -16,66.4 -22.5,66.3',
  '-5.5,50 1.3,51.2 1.5,52.7 -1.5,55 -2,57.5 -5,58.6 -5.5,56 -3,54 -4.5,52.5', '-10,52 -6.3,52.3 -6,54.5 -8.5,55.2 -10,54',
  '12.500,38 15.500,38.200 15,36.800', '8.300,39 9.700,39.200 9.500,43 8.500,42', '24,35.500 26,35.200 24,35',
  // asia islands
  '131,34 133,34.3 136,33.6 140.7,35.7 142,39.5 141,41.3 139.8,39 136.8,37.2 135.5,35.6', '140.3,42 143.3,42 145.4,43.3 141.8,45.4', '130,33.5 131.8,33.5 130.7,31.2',
  '142.5,46.2 143.5,50 142.7,54.3 142,49', '120.3,23 121.8,25 120.9,22', '79.800,9.500 81.800,7.500 80.500,6',
  '120.5,18.4 122,18.4 121.5,14 124,12.7 120.3,14.5', '122,7 126,6.3 125.8,9.5 123.5,8.5', '138,75.500 148,75 143,73.500',
  '109,1.7 111,-3 116,-4 119,1 117,4.3 117,7 113,3.5', '95.3,5.6 99,3.5 104,-2 106,-5.8 102,-4 98.5,1.5', '105.5,-6.3 114.4,-7.8 114.4,-8.7 106.5,-7.4',
  '119,-5 119,0 125,1.5 121,0 123,-4.5 120.7,-3', '131,-.8 134,-1 135.3,-3.3 141,-2.6 147.5,-6 150.5,-10.5 144,-7.7 138,-8.3 138,-5.5 133,-3.9',
  // oceania
  '114,-22 114,-26 115.8,-32 115.2,-34.3 118,-35 124,-33 131,-31.5 135.8,-34.8 138,-33 138.5,-35.6 143.5,-38.8 146.5,-39 150,-37.4 153.5,-28.5 150.5,-23 146,-19 145.3,-15 142.5,-10.8 141.5,-14 140.5,-17.6 135.5,-15 136.8,-12.2 131,-11.8 129,-15 125,-14.5 122.2,-18',
  '144.7,-40.8 148.3,-40.9 146.8,-43.6', '172.8,-34.5 178.4,-37.8 175.3,-41.6 173.8,-39.2', '172.7,-40.6 174.2,-41.8 170.8,-45.9 168.4,-46.6 166.5,-45.9'
];
const ice = [
  '-44,59.9 -46,61 -50,62 -51.5,64 -53.5,67 -51,69 -54,70.5 -55,73 -58,75 -68,76 -72,78 -65,80 -60,82.5 -30,83.5 -12,81.5 -18,79 -19,76 -21,74 -22,72 -25,71 -22,70.3 -27,68.5 -32,68 -38,65.5 -40,64 -42,62.5',
  '52,71 57,70.7 55.5,72 57,74 61,75.5 68.5,76.8 60,76 54.500,73.5', '12,79.5 16,76.7 19,78 21,78.5 27,80 16,80.500', '95,80 100,78.500 105,79 98,81',
  '-180,-78 -75,-73 -72,-72 -69,-70 -67,-68 -62,-65.500 -57,-63.3 -59,-65 -61,-67 -60.500,-73 -25,-75 -13,-71.5 -8,-70.500 0,-70 8,-70.200 20,-70 27,-69.700 33,-68.7 38,-69.500 45,-67.500 50,-66.5 58,-67 64,-67.600 70,-69.5 75,-69.5 82,-66.7 88,-67 93,-66.400 100,-65.8 105,-66.300 110,-65.900 118,-67 127,-66.300 135,-66 145,-67 150,-68.5 158,-69.300 165,-71 172,-73 180,-78'
];
const lakes = ['47,42.5 47.3,45 51,46.8 53,46 51,44 53,40.5 53.8,37 50,37.4 49.5,40', '-92,46.700 -84.500,46.800 -82,43 -83,45.500 -86,46 -87.500,42 -88,44.500', '58.500,45 61,46.500 61,44'];

// terrain tint: lon, lat, rx px, ry px, colour
const terrain = [
  [100, 60, 95, 22, '#3a5722'], [30, 57, 30, 16, '#4a5c2c'], [-100, 56, 46, 16, '#46562b'], [-83, 38, 16, 16, '#4a632b'],
  [130, 71, 80, 9, '#71704a'], [90, 73, 30, 12, '#7b7545'], [-95, 70, 60, 14, '#877655'], [-68, 60, 12, 10, '#7b7050'],
  [65, 46, 34, 13, '#b59a6c'], [98, 41, 38, 9, '#c6a775'], [82, 37, 18, 8, '#e0c798'], [90, 32, 20, 6, '#b79c72'], [60, 32, 18, 11, '#c9a878'],
  [46, 23, 22, 17, '#e3bf8f'], [3, 24, 38, 17, '#eed0a4'], [24, 24, 26, 17, '#efcd9d'], [20, 1, 26, 11, '#2f5a1d'], [-5, 8, 16, 5, '#4b6023'],
  [45, 7, 8, 8, '#bd935e'], [22, -25, 16, 14, '#b9945f'], [33, -8, 8, 12, '#6a6a30'], [76, 20, 9, 14, '#7c763e'], [103, 17, 12, 14, '#41602a'],
  [112, 27, 16, 9, '#506a31'], [-110, 37, 13, 17, '#b5986b'], [-104, 25, 8, 12, '#a98a5a'], [-90, 16, 10, 7, '#3b5a24'],
  [-62, -4, 24, 15, '#2c5119'], [-44, -12, 11, 14, '#7b6b39'], [-58, -26, 14, 10, '#6c6d35'], [-70, -22, 4, 22, '#c0a173'], [-68, -42, 7, 18, '#a68b60'],
  [132, -25, 28, 15, '#cb9464'], [147, -30, 8, 12, '#93804a'], [-4, 40, 8, 5, '#a58c5c'], [38, 38, 12, 4, '#a38c60'], [-136, 60, 12, 3, '#e8e6e2'], [78, 34, 10, 3, '#e9e0d0']
];
const landPath = land.map(shape).join('');
const icePath = ice.map(shape).join('');

const names = [
  ['EUROPE', 78, 122], ['ASIA', 180, 134], ['AFRICA', 76, 190], ['AUSTRALIA', 236, 244],
  ['NORTH AMERICA', 414, 124], ['SOUTH AMERICA', 476, 222]
];
const seas = [
  ['Arctic Ocean', 354, 12], ['Pacific', 280, 144], ['Ocean', 281, 157], ['Pacific Ocean', 359, 190],
  ['Atlantic', 492, 157], ['Ocean', 492, 170], ['Indian Ocean', 160, 239], ['Pacific', 277, 307], ['Ocean', 277, 320]
];
const G = '#1c9a44', Y = '#ffff33', R = '#d7191c';
const assets = [
  [381, 120, R], [388, 149, Y], [418, 152, G], [415, 173, G], [455, 134, G], [443, 130, R], [431, 135, Y], [452, 133, Y], [436, 150, G], [444, 146, G], [449, 139, G],
  [553, 122, Y], [564, 117, R], [559, 139, G], [551, 138, G], [556, 115, G], [587, 114, R], [575, 113, G], [574, 135, R], [573, 123, G], [562, 132, G], [593, 130, Y], [590, 143, G],
  [737, 143, R], [755, 147, R], [729, 164, G], [729, 154, G], [622, 165, R], [612, 170, Y], [660, 173, G], [561, 192, G],
  [704, 199, G], [701, 197, G], [596, 240, G], [771, 252, G], [490, 236, R], [473, 253, G]
];

let svg = `<defs>
  <linearGradient id="sea" x1="0" y1="0" x2="0" y2="1"><stop offset="0" stop-color="#175089"/><stop offset=".22" stop-color="#14508a"/><stop offset=".4" stop-color="#03285c"/><stop offset=".8" stop-color="#042757"/><stop offset="1" stop-color="#08356a"/></linearGradient>
  <filter id="soft" x="-50%" y="-50%" width="200%" height="200%"><feGaussianBlur stdDeviation="5"/></filter>
  <filter id="shelf" x="-10%" y="-10%" width="120%" height="120%"><feGaussianBlur stdDeviation="3"/></filter>
  <filter id="grain"><feTurbulence type="fractalNoise" baseFrequency=".12" numOctaves="4" seed="4"/><feColorMatrix values="0 0 0 0 0  0 0 0 0 0  0 0 0 0 0  2.600 0 0 0 -1.100"/></filter>
  <filter id="swell"><feTurbulence type="fractalNoise" baseFrequency=".018" numOctaves="4" seed="9"/><feColorMatrix values="0 0 0 0 .12  0 0 0 0 .4  0 0 0 0 .66  1.800 0 0 0 -.750"/></filter>
  <clipPath id="coast"><path d="${landPath}"/></clipPath>
  <g id="earth">
    <path d="${landPath}" fill="none" stroke="#1d5f9c" stroke-width="8" opacity=".6" filter="url(#shelf)"/>
    <g clip-path="url(#coast)">
      <rect x="-260" y="-20" width="560" height="380" fill="#5c6634"/>
      <g filter="url(#shelf)">${terrain.map(t => `<ellipse cx="${px(t[0])}" cy="${py(t[1])}" rx="${t[2]}" ry="${t[3]}" fill="${t[4]}" opacity=".9"/>`).join('')}</g>
      <rect x="-260" y="-20" width="560" height="380" filter="url(#grain)" opacity=".22"/>
    </g>
    <path d="${lakes.map(shape).join('')}" fill="#14497a"/>
    <path d="${icePath}" fill="#f6f7f9" stroke="#d5dbe2"/>
  </g></defs>
  <rect width="100%" height="100%" fill="url(#sea)"/>
  <rect width="100%" height="100%" filter="url(#swell)" opacity=".35"/>`;
for (let i = -1; i < 4; i++) svg += `<ellipse cx="${345 + i * WORLD}" cy="22" rx="38" ry="26" fill="#06316a" opacity=".75" filter="url(#soft)"/>`;
for (let i = 0; i < 4; i++) svg += `<use href="#earth" x="${MERIDIAN + i * WORLD}"/>`;
for (let i = -1; i < 3; i++) {
  names.forEach(n => svg += `<text class="land-name" x="${n[1] + i * WORLD}" y="${n[2]}">${n[0]}</text>`);
  seas.forEach(n => svg += `<text class="sea-name" x="${n[1] + i * WORLD}" y="${n[2]}">${n[0]}</text>`);
}
assets.forEach(a => svg += `<circle cx="${a[0]}" cy="${a[1]}" r="7" fill="${a[2]}" stroke="#fff" stroke-width="2"/>`);
svg += '<circle cx="722" cy="139" r="7" fill="#0d4f22" stroke="#000" stroke-width="2"/>';
document.getElementById('world').innerHTML = svg;

// ---- scorecard rows ----
const data = [
  ['AB', 'BED-AB', 'OFFICE', 'Leased', '$0.00', '$0.00', '$-29,431,522.69', '$-57.69'],
  ['ATLWAR', 'ATLPRP', 'WAREHOUSE', 'Sold', '$21,648,000.00', '$5,620,722.61', '$0.00', '$0.00'],
  ['BARCOFF', 'BARCPRP', 'MFG', 'Owned and Leased', '$123,228,500.00', '$34,243,966.43', '$0.00', '$0.00'],
  ['BEIJOFF', 'BEIJPRP', 'OFFICE', 'Leased', '$0.00', '$0.00', '$-1,083,600.00', '$-60.20'],
  ['BERMANU', 'BERPRP', 'MFG', 'Leased', '$0.00', '$0.00', '$-5,624,000.00', '$-59.20'],
  ['BOSMED', '', 'MEDICAL', 'Leased', '$0.00', '$0.00', '$-13,490,116.96', '$-95.60'],
  ['BOSOFF', 'BILLBOARD #2222', 'OFFICE', 'Owned', '$877,500.00', '$216,838.59', '$0.00', '$0.00'],
  ['BRUSSOFF', 'BRUSPRP', 'OFFICE', 'Leased', '$0.00', '$0.00', '$-1,082,400.00', '$-90.20']
];
document.getElementById('rows').innerHTML = data.map(r => {
  const high = ['$-95.60', '$-90.20'].includes(r[7]);
  return `<tr class="${r[0] === 'BEIJOFF' ? 'hover' : ''}">
    <td><input type="checkbox" aria-label="Select ${r[0]}"></td>
    <td class="ico wide"><svg width="14" height="16"><use href="#i-stack"/></svg></td>
    <td class="ico wide"><svg width="14" height="16"><use href="#i-bars"/></svg></td>
    <td class="ico"><svg width="10" height="14"><use href="#i-pin"/></svg></td>
    <td class="ico"><svg width="14" height="14"><use href="#i-info"/></svg></td>
    ${r.slice(0, 4).map(v => `<td>${v}</td>`).join('')}
    ${r.slice(4, 7).map(v => `<td class="fig">${v}</td>`).join('')}
    <td class="fig ${high ? 'high' : 'low'}">${r[7]}</td><td></td></tr>`;
}).join('');
```
